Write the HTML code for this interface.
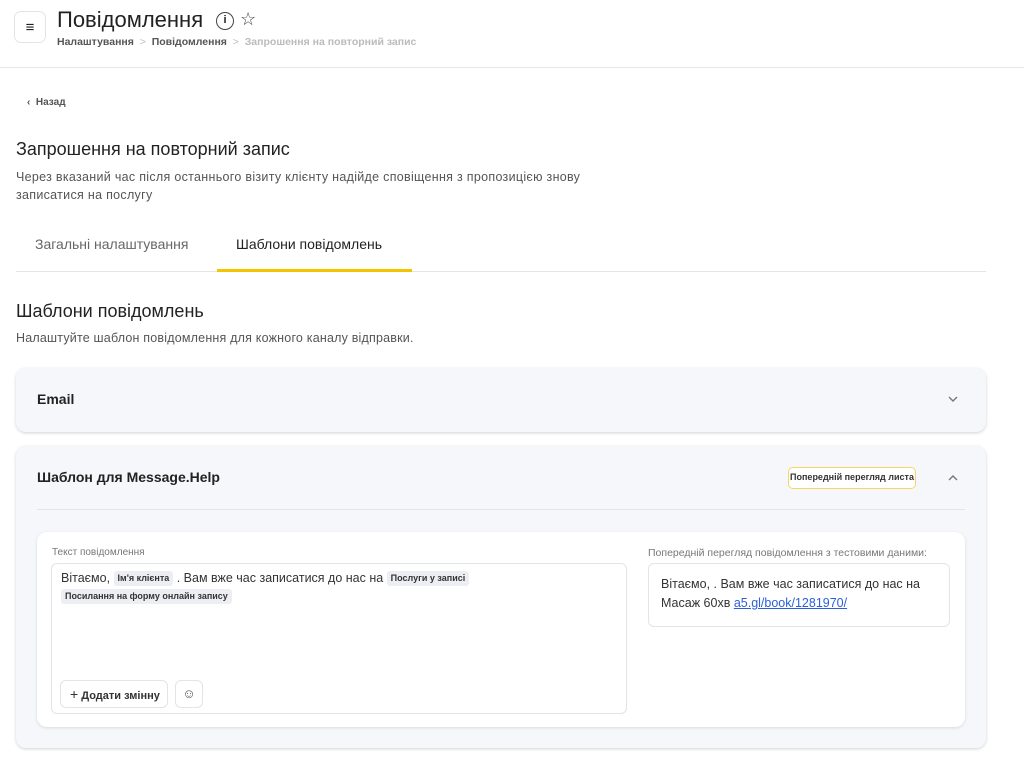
<!DOCTYPE html>
<html><head><meta charset="utf-8"><style>
*{box-sizing:border-box;margin:0;padding:0}
body{width:1024px;height:761px;background:#fff;font-family:"Liberation Sans",sans-serif;color:#222;position:relative;overflow:hidden}
.a{position:absolute}
.menu{left:14px;top:11px;width:32px;height:32px;border:1px solid #e3e4e8;border-radius:7px;display:flex;align-items:center;justify-content:center;font-size:15px;font-weight:bold}
.chip{display:inline-block;background:#eceef3;border-radius:3px;font-size:9px;font-weight:bold;padding:1px 4px;line-height:13px;color:#333;vertical-align:1px}
.card{background:#f6f7fa;border-radius:10px;box-shadow:0 1px 3px rgba(0,0,0,.18)}
</style></head><body>
<div class="a menu">≡</div>
<div class="a" style="left:57px;top:7px;font-size:22px;color:#222">Повідомлення</div>
<div class="a" style="left:216px;top:12px;width:18px;height:18px;border:1.5px solid #444;border-radius:50%;font-size:11px;text-align:center;line-height:15px;font-weight:bold">i</div>
<div class="a" style="left:240px;top:9px;font-size:18px;color:#444">☆</div>
<div class="a" style="left:57px;top:36px;font-size:10.5px;font-weight:bold;color:#555">Налаштування <span style="color:#bbb;font-weight:normal">&nbsp;&gt;&nbsp;</span> Повідомлення <span style="color:#bbb;font-weight:normal">&nbsp;&gt;&nbsp;</span> <span style="color:#bbb">Запрошення на повторний запис</span></div>
<div class="a" style="left:0;top:67px;width:1024px;height:1px;background:#e6e7ea"></div>
<div class="a" style="left:27px;top:97px;font-size:10px;font-weight:bold;color:#555">‹ &nbsp;Назад</div>
<div class="a" style="left:16px;top:139px;font-size:18px;color:#222">Запрошення на повторний запис</div>
<div class="a" style="left:16px;top:168px;font-size:12.5px;color:#555;line-height:18px;width:595px;letter-spacing:0.3px">Через вказаний час після останнього візиту клієнту надійде сповіщення з пропозицією знову записатися на послугу</div>
<div class="a" style="left:35px;top:236px;font-size:14px;color:#666">Загальні налаштування</div>
<div class="a" style="left:236px;top:236px;font-size:14px;color:#222">Шаблони повідомлень</div>
<div class="a" style="left:16px;top:271px;width:970px;height:1px;background:#e3e4e8"></div>
<div class="a" style="left:217px;top:269px;width:195px;height:3px;background:#f5c400"></div>
<div class="a" style="left:16px;top:301px;font-size:18px;color:#222">Шаблони повідомлень</div>
<div class="a" style="left:16px;top:331px;font-size:12.5px;color:#555;letter-spacing:0.2px">Налаштуйте шаблон повідомлення для кожного каналу відправки.</div>
<div class="a card" style="left:16px;top:368px;width:970px;height:64px"></div>
<div class="a" style="left:37px;top:391px;font-size:14px;font-weight:bold">Email</div>
<svg class="a" style="left:947px;top:395px" width="12" height="8"><path d="M2 2l4 4 4-4" fill="none" stroke="#777" stroke-width="1.4"/></svg>
<div class="a card" style="left:16px;top:446px;width:970px;height:302px"></div>
<div class="a" style="left:37px;top:469px;font-size:14px;font-weight:bold">Шаблон для Message.Help</div>
<div class="a" style="left:788px;top:467px;width:128px;height:22px;border:1.5px solid #f5d565;border-radius:5px;background:#fff;font-size:9px;font-weight:bold;color:#333;text-align:center;line-height:19px">Попередній перегляд листа</div>
<svg class="a" style="left:947px;top:474px" width="12" height="8"><path d="M2 6l4-4 4 4" fill="none" stroke="#777" stroke-width="1.4"/></svg>
<div class="a" style="left:37px;top:509px;width:928px;height:1px;background:#e3e4e8"></div>
<div class="a" style="left:37px;top:532px;width:928px;height:195px;background:#fff;border-radius:10px;box-shadow:0 1px 3px rgba(0,0,0,.12)"></div>
<div class="a" style="left:52px;top:547px;font-size:10px;color:#777">Текст повідомлення</div>
<div class="a" style="left:51px;top:563px;width:576px;height:151px;border:1px solid #e3e4e8;border-radius:6px"></div>
<div class="a" style="left:61px;top:569px;width:560px;font-size:12.5px;line-height:18px;color:#333">Вітаємо, <span class="chip">Ім'я клієнта</span> . Вам вже час записатися до нас на <span class="chip">Послуги у записі</span><br><span class="chip">Посилання на форму онлайн запису</span></div>
<div class="a" style="left:60px;top:680px;width:108px;height:28px;border:1px solid #e3e4e8;border-radius:6px;font-size:11px;font-weight:bold;color:#333;line-height:26px;padding-left:9px"><span style="font-size:14px;font-weight:normal">+</span> Додати змінну</div>
<div class="a" style="left:175px;top:680px;width:28px;height:28px;border:1px solid #e3e4e8;border-radius:6px;font-size:13px;text-align:center;line-height:26px;color:#555">☺</div>
<div class="a" style="left:648px;top:547px;font-size:10.5px;color:#777">Попередній перегляд повідомлення з тестовими даними:</div>
<div class="a" style="left:648px;top:563px;width:302px;height:64px;border:1px solid #e3e4e8;border-radius:6px;padding:11px 12px;font-size:12.5px;line-height:19px;color:#333">Вітаємо, . Вам вже час записатися до нас на Масаж 60хв <span style="color:#2b5fd9;text-decoration:underline">a5.gl/book/1281970/</span></div>
</body></html>
